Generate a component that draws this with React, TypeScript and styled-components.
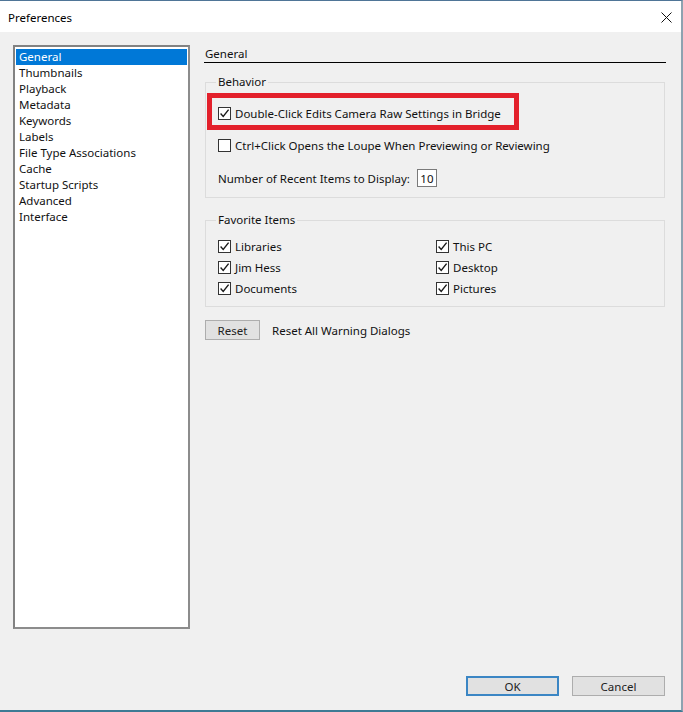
import styled, { createGlobalStyle } from "styled-components";

const GlobalStyle = createGlobalStyle`
    html, body {
        margin: 0;
        padding: 0;
        background: #f0f0f0;
    }
    * {
        box-sizing: border-box;
    }
`;

const sections = [
    "General",
    "Thumbnails",
    "Playback",
    "Metadata",
    "Keywords",
    "Labels",
    "File Type Associations",
    "Cache",
    "Startup Scripts",
    "Advanced",
    "Interface",
];

const favorites = [
    ["Libraries", "This PC"],
    ["Jim Hess", "Desktop"],
    ["Documents", "Pictures"],
];

function Check({ checked }: { checked: boolean }) {
    return (
        <CheckBox>
            {checked && (
                <svg width="11" height="11" viewBox="0 0 11 11">
                    <path d="M1.6 5.6 L4.2 8.4 L9.6 1.6" fill="none" stroke="#1a1a1a" strokeWidth="1.4" />
                </svg>
            )}
        </CheckBox>
    );
}

export default function App() {
    return (
        <>
            <GlobalStyle />
            <Frame>
                <TitleBar>
                    <span>Preferences</span>
                    <CloseButton>
                        <svg width="11" height="11" viewBox="0 0 11 11">
                            <path d="M0.5 0.5 L10.5 10.5 M10.5 0.5 L0.5 10.5" stroke="#111" strokeWidth="1" />
                        </svg>
                    </CloseButton>
                </TitleBar>
                <Body>
                    <Main>
                        <SideList>
                            {sections.map((s, i) => (
                                <ListItem key={s} $selected={i === 0}>{s}</ListItem>
                            ))}
                        </SideList>
                        <Content>
                            <Header>General</Header>
                            <Group $top={11}>
                                <Legend>Behavior</Legend>
                                <Highlight>
                                    <CheckRow>
                                        <Check checked />
                                        Double-Click Edits Camera Raw Settings in Bridge
                                    </CheckRow>
                                </Highlight>
                                <CheckRow $indent $top={5}>
                                    <Check checked={false} />
                                    Ctrl+Click Opens the Loupe When Previewing or Reviewing
                                </CheckRow>
                                <NumberRow>
                                    Number of Recent Items to Display:
                                    <NumberInput>10</NumberInput>
                                </NumberRow>
                            </Group>
                            <Group $top={14}>
                                <Legend>Favorite Items</Legend>
                                <FavGrid>
                                    {favorites.flat().map((f) => (
                                        <FavRow key={f}>
                                            <Check checked />
                                            {f}
                                        </FavRow>
                                    ))}
                                </FavGrid>
                            </Group>
                            <ResetRow>
                                <Button $width={55}>Reset</Button>
                                Reset All Warning Dialogs
                            </ResetRow>
                        </Content>
                    </Main>
                    <Footer>
                        <Button $width={93} $default>OK</Button>
                        <Button $width={93}>Cancel</Button>
                    </Footer>
                </Body>
            </Frame>
        </>
    );
}

const Frame = styled.div`
    width: 683px;
    height: 712px;
    display: flex;
    flex-direction: column;
    border-top: 1px solid #4f7597;
    border-right: 2px solid #8da2b0;
    border-bottom: 2px solid #3d7a94;
    background: #f0f0f0;
    font-family: "Noto Sans", "Open Sans", sans-serif;
    font-size: 11.5px;
    color: #111;
`;

const TitleBar = styled.div`
    height: 31px;
    background: #fff;
    display: flex;
    align-items: center;
    justify-content: space-between;
    padding: 1px 0 0 8px;
    font-size: 11.5px;
    color: #000;
`;

const CloseButton = styled.div`
    width: 44px;
    height: 30px;
    display: flex;
    align-items: center;
    justify-content: center;
    margin-right: -7px;
`;

const Body = styled.div`
    flex: 1;
    display: flex;
    flex-direction: column;
    padding: 13px 15px 14px 13px;
`;

const Main = styled.div`
    display: flex;
    gap: 15px;
`;

const SideList = styled.div`
    width: 177px;
    height: 584px;
    background: #fff;
    border: 2px solid #828282;
    border-right-color: #8c8c8c;
    border-bottom-color: #8c8c8c;
    padding: 2px 1px;
`;

const ListItem = styled.div<{ $selected?: boolean }>`
    height: 16px;
    line-height: 16px;
    padding-left: 3px;
    white-space: nowrap;
    background: ${(p) => (p.$selected ? "#0078d7" : "transparent")};
    color: ${(p) => (p.$selected ? "#fff" : "#111")};
`;

const Content = styled.div`
    flex: 1;
    display: flex;
    flex-direction: column;
`;

const Header = styled.div`
    height: 18px;
    line-height: 17px;
    border-bottom: 1px solid #000;
    margin-left: -1px;
    padding-left: 1px;
`;

const Group = styled.fieldset<{ $top: number }>`
    margin: ${(p) => p.$top}px 1px 0 0;
    border: 1px solid #dcdcdc;
    padding: 3px 0 9px 1px;
    min-width: 0;
`;

const Legend = styled.legend`
    padding: 0 2px;
    margin-left: 9px;
    line-height: 16px;
    height: 16px;
`;

const Highlight = styled.div`
    width: 312px;
    border: 5px solid #e3202b;
    padding: 5px 0 2px 6px;
`;

const CheckRow = styled.div<{ $indent?: boolean; $top?: number }>`
    height: 20px;
    display: flex;
    align-items: center;
    gap: 4px;
    white-space: nowrap;
    padding-left: ${(p) => (p.$indent ? "11px" : "0")};
    margin-top: ${(p) => p.$top ?? 0}px;
`;

const CheckBox = styled.span`
    width: 13px;
    height: 13px;
    flex: none;
    border: 1px solid #333;
    background: #fff;
    display: flex;
    align-items: center;
    justify-content: center;
`;

const NumberRow = styled.div`
    height: 20px;
    margin-top: 13px;
    padding-left: 11px;
    display: flex;
    align-items: center;
    gap: 7px;
    white-space: nowrap;
`;

const NumberInput = styled.span`
    width: 20px;
    height: 18px;
    border: 1px solid #7a7a7a;
    background: #fff;
    display: flex;
    align-items: center;
    justify-content: center;
`;

const FavGrid = styled.div`
    display: grid;
    grid-template-columns: 218px 1fr;
    padding: 5px 0 0 11px;
    margin-bottom: -2px;
`;

const FavRow = styled.div`
    height: 21px;
    display: flex;
    align-items: center;
    gap: 4px;
    white-space: nowrap;
`;

const ResetRow = styled.div`
    margin-top: 13px;
    display: flex;
    align-items: center;
    gap: 12px;
`;

const Button = styled.div<{ $width: number; $default?: boolean }>`
    width: ${(p) => p.$width}px;
    height: 20px;
    display: flex;
    align-items: center;
    justify-content: center;
    background: #e1e1e1;
    border: ${(p) => (p.$default ? "2px solid #3b86c4" : "1px solid #adadad")};
    color: #222;
`;

const Footer = styled.div`
    margin-top: auto;
    display: flex;
    justify-content: flex-end;
    gap: 13px;
    padding-right: 1px;
`;
